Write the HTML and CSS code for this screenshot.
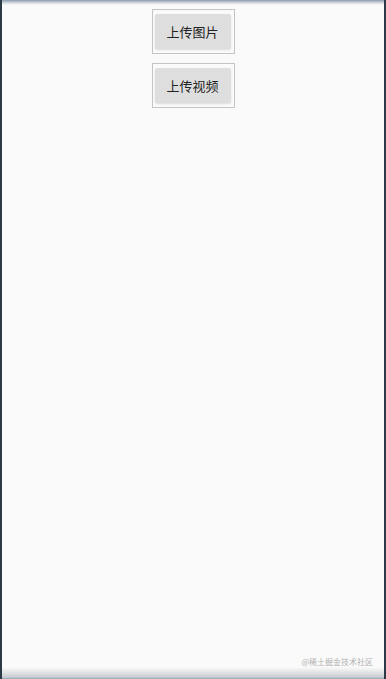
FILE: index.html
```html
<!DOCTYPE html>
<html lang="zh">
<head>
<meta charset="utf-8">
<title>上传</title>
<link rel="stylesheet" href="styles.css">
</head>
<body>
<div class="frame">
  <div class="top-shade"></div>
  <main class="content">
    <div class="btn-box"><button class="btn">上传图片</button></div>
    <div class="btn-box"><button class="btn">上传视频</button></div>
  </main>
  <div class="watermark">@稀土掘金技术社区</div>
  <div class="bottom-shade"></div>
</div>
</body>
</html>
```
FILE: styles.css
```css
html, body {
  margin: 0;
  padding: 0;
  height: 100%;
}
body {
  background: #2b3a46;
  font-family: "Noto Sans CJK SC", "Noto Sans", sans-serif;
}
.frame {
  position: relative;
  height: 679px;
  margin: 0 2px 0 2px;
  background: #fafafa;
  display: flex;
  flex-direction: column;
  box-sizing: border-box;
}
.top-shade {
  height: 5px;
  background: linear-gradient(#8a9aab, #d8dde2 60%, #fafafa);
  flex: none;
}
.content {
  flex: 1;
  display: flex;
  flex-direction: column;
  align-items: center;
  gap: 9px;
  padding-top: 4px;
  padding-left: 0;
}
.btn-box {
  border: 1px solid #c4c4c4;
  padding: 4px 3px 4px 2px;
  background: #fafafa;
}
.btn {
  display: block;
  width: 76px;
  height: 35px;
  border: none;
  border-radius: 2px;
  background: #dedede;
  box-shadow: 0 1px 2px rgba(0,0,0,0.12);
  font-family: "Noto Sans CJK SC", "Noto Sans", sans-serif;
  font-size: 13px;
  color: #222;
  padding: 0;
}
.watermark {
  position: absolute;
  right: 11px;
  bottom: 12px;
  font-size: 8px;
  color: #b0b0b0;
}
.bottom-shade {
  height: 12px;
  flex: none;
  background: linear-gradient(#fafafa, #dfe1e3 50%, #c8cdd2 85%, #8fa2b4);
}
```
